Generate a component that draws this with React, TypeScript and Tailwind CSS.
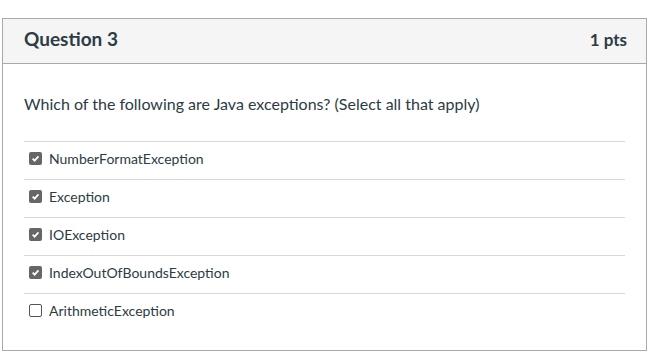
const OPTIONS = [
  { label: "NumberFormatException", checked: true },
  { label: "Exception", checked: true },
  { label: "IOException", checked: true },
  { label: "IndexOutOfBoundsException", checked: true },
  { label: "ArithmeticException", checked: false },
];

function Box({ checked }: { checked: boolean }) {
  if (!checked) {
    return <span className="w-[13px] h-[13px] rounded-[2px] border border-[#555] bg-white shrink-0" />;
  }
  return (
    <span className="w-[13px] h-[13px] rounded-[2px] bg-[#666] shrink-0 flex items-center justify-center">
      <svg width="9" height="9" viewBox="0 0 10 10">
        <path d="M1.8 5.2 L4 7.4 L8.3 2.6" fill="none" stroke="white" strokeWidth="1.9" />
      </svg>
    </span>
  );
}

export default function App() {
  return (
    <div className="w-[665px] h-[360px] bg-white pt-[18px] pl-[2px]" style={{ fontFamily: "Lato, 'Open Sans', sans-serif" }}>
      <div className="w-[645px] h-[333px] border border-[#a9a9a9]">
        <div className="h-[45px] bg-[#f5f5f5] border-b border-[#a9a9a9] flex items-center justify-between pl-[21px] pr-[19px] pb-[3px] text-[#2d3b45]">
          <h2 className="text-[19px] font-bold">Question 3</h2>
          <span className="text-[17px] font-bold">1 pts</span>
        </div>
        <div className="px-[21px] pt-[28px]">
          <p className="text-[16px] leading-[24px] text-[#2d3b45] mb-[25px]">
            Which of the following are Java exceptions? (Select all that apply)
          </p>
          {OPTIONS.map((o) => (
            <div key={o.label} className="h-[38px] border-t border-[#d7d7d7] flex items-center gap-[7px] pl-[5px] pb-[5px]">
              <Box checked={o.checked} />
              <span className="text-[14px] text-[#2d3b45]">{o.label}</span>
            </div>
          ))}
        </div>
      </div>
    </div>
  );
}
